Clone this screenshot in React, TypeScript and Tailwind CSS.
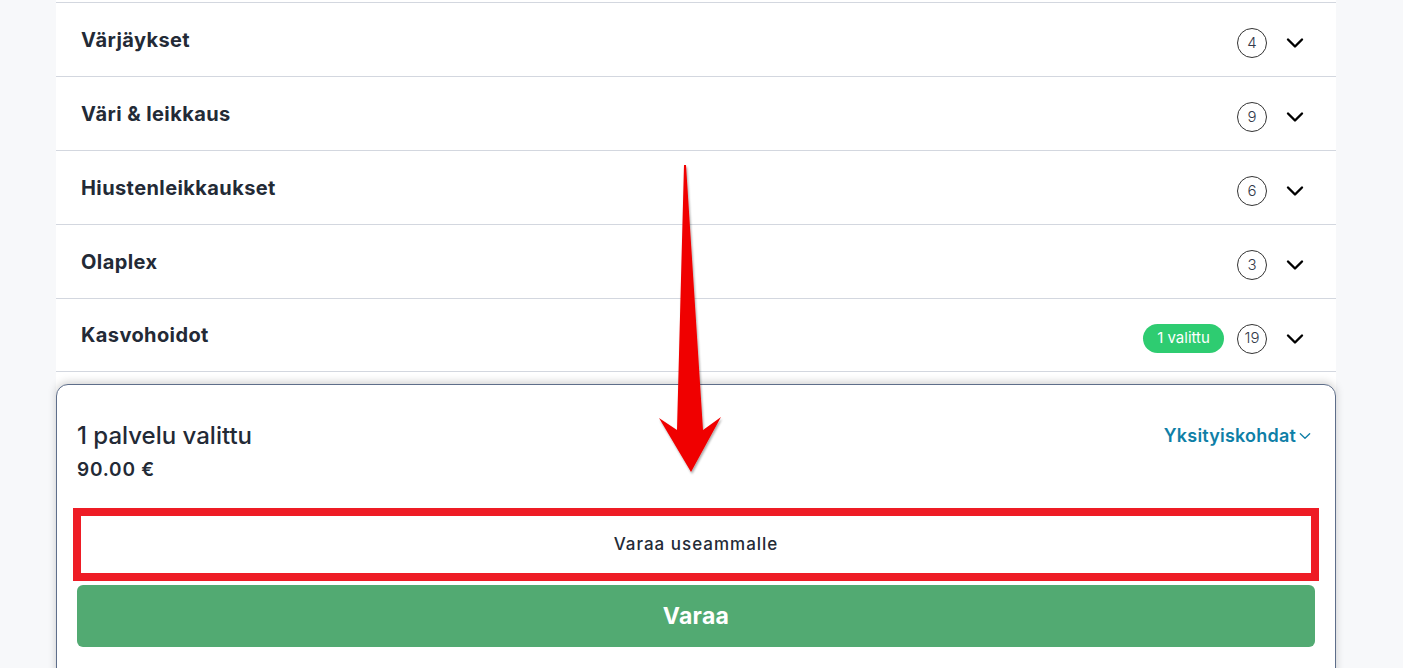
import React from "react";

const rows = [
  { title: "Värjäykset", count: 4 },
  { title: "Väri & leikkaus", count: 9 },
  { title: "Hiustenleikkaukset", count: 6 },
  { title: "Olaplex", count: 3 },
  { title: "Kasvohoidot", count: 19, badge: "1 valittu" },
];

function Chevron({ className, sw = 2.6 }: { className?: string; sw?: number }) {
  return (
    <svg viewBox="0 0 24 24" className={className} fill="none" stroke="currentColor" strokeWidth={sw} strokeLinecap="round" strokeLinejoin="round">
      <path d="M5 8.5l7 7 7-7" />
    </svg>
  );
}

export default function App() {
  return (
    <div
      className="relative h-[668px] w-full overflow-hidden bg-[#f7f8fa]"
      style={{ fontFamily: 'Inter, "Noto Sans", sans-serif' }}
    >
      <div className="ml-[56px] w-[1280px] bg-white pt-[2px] h-full">
        <div className="border-t border-[#d3d7df]">
          {rows.map((r) => (
            <div
              key={r.title}
              className="flex h-[74px] items-center justify-between border-b border-[#d3d7df] pl-[25px] pr-[29px] last:h-[73px]"
            >
              <span className="text-[20px] font-bold tracking-[0.4px] text-[#232a36]">{r.title}</span>
              <div className="mt-[7px] flex items-center">
                {r.badge && (
                  <span className="mr-[13px] flex h-[29px] w-[81px] items-center justify-center rounded-full bg-[#2ecc71] text-[15px] text-white">
                    {r.badge}
                  </span>
                )}
                <span className="flex h-[30px] w-[30px] items-center justify-center rounded-full border border-[#333] text-[15px] font-light text-[#333a4a]">
                  {r.count}
                </span>
                <Chevron className="ml-[16px] h-[24px] w-[24px] text-black" sw={2.4} />
              </div>
            </div>
          ))}
        </div>

        <div className="mt-[12px] h-[400px] rounded-t-[12px] border border-[#5e6e8a] bg-white px-5 pt-[37px] shadow-[0_-2px_8px_rgba(0,0,0,0.18)]">
          <div className="flex items-start justify-between">
            <div>
              <div className="text-[24px] font-medium leading-[28px] text-[#232a36]">1 palvelu valittu</div>
              <div className="mt-[8px] text-[19px] font-semibold leading-[24px] tracking-[0.8px] text-[#232a36]">90.00 €</div>
            </div>
            <button className="mr-[2px] mt-[2px] flex items-center text-[18px] font-semibold leading-[24px] tracking-[0.2px] text-[#0f7fa7]">
              Yksityiskohdat
              <Chevron className="ml-[1px] h-[16px] w-[16px]" sw={2} />
            </button>
          </div>
          <button className="-mx-1 mt-[26px] flex h-[73px] w-[calc(100%+8px)] items-center justify-center border-[8px] border-[#ee1c25] bg-white text-[17px] font-medium tracking-[1px] text-[#232a36]">
            Varaa useammalle
          </button>
          <button className="mt-[4px] flex h-[62px] w-full items-center justify-center rounded-[6px] bg-[#52aa72] text-[23px] font-bold tracking-[0.3px] text-white">
            Varaa
          </button>
        </div>
      </div>

      <svg
        className="pointer-events-none absolute left-0 top-0"
        width="1403"
        height="668"
        viewBox="0 0 1403 668"
      >
        <defs>
          <filter id="sh" x="-20%" y="-5%" width="140%" height="110%">
            <feDropShadow dx="1" dy="2" stdDeviation="1.2" floodColor="#000" floodOpacity="0.35" />
          </filter>
        </defs>
        <polygon
          points="684,165 686,165 703,430 721,417 691,472 659,418 677,430"
          fill="#f00000"
          filter="url(#sh)"
        />
      </svg>
    </div>
  );
}
